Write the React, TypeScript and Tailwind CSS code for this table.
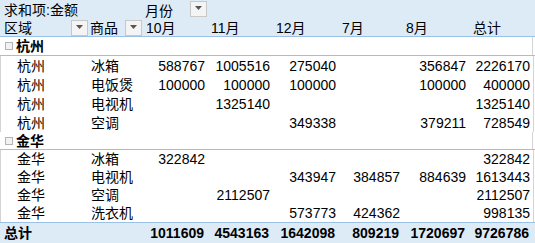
import React from 'react';

type Row = { region: string; product: string; values: (number | null)[]; total: number };

const months = ['10月', '11月', '12月', '7月', '8月'];

const groups: { name: string; h: string; rowH: string; rows: Row[] }[] = [
  {
    name: '杭州',
    h: 'h-[19px]',
    rowH: 'h-[19px]',
    rows: [
      { region: '杭州', product: '冰箱', values: [588767, 1005516, 275040, null, 356847], total: 2226170 },
      { region: '杭州', product: '电饭煲', values: [100000, 100000, 100000, null, 100000], total: 400000 },
      { region: '杭州', product: '电视机', values: [null, 1325140, null, null, null], total: 1325140 },
      { region: '杭州', product: '空调', values: [null, null, 349338, null, 379211], total: 728549 },
    ],
  },
  {
    name: '金华',
    h: 'h-[18px]',
    rowH: 'h-[18px]',
    rows: [
      { region: '金华', product: '冰箱', values: [322842, null, null, null, null], total: 322842 },
      { region: '金华', product: '电视机', values: [null, null, 343947, 384857, 884639], total: 1613443 },
      { region: '金华', product: '空调', values: [null, 2112507, null, null, null], total: 2112507 },
      { region: '金华', product: '洗衣机', values: [null, null, 573773, 424362, null], total: 998135 },
    ],
  },
];

const totals = [1011609, 4543163, 1642098, 809219, 1720697, 9726786];

const cols = 'grid grid-cols-[88px_54px_65px_65px_66px_64px_66px_64px_3px]';

const Dropdown = () => (
  <span className="flex h-[16px] w-[17px] items-start justify-center border border-[#c8c8c8] bg-[#f4f4f4] pt-[4px]">
    <svg width="7" height="4" viewBox="0 0 7 4">
      <path d="M0 0h7L3.5 4z" fill="#555" />
    </svg>
  </span>
);

const Collapse = () => (
  <span className="mr-[3px] inline-block h-[8px] w-[8px] border border-[#b4b4b4] bg-[#f2f2f2]" />
);

const Num = ({ v }: { v: number | null }) => (
  <div className="flex items-end justify-end pr-[3px] pb-[1px]">{v ?? ''}</div>
);

export default function App() {
  return (
    <div
      className="w-[535px] h-[243px] overflow-hidden bg-white text-[14px] leading-[16px] text-black"
      style={{ fontFamily: '"Liberation Sans", "Noto Sans CJK SC", sans-serif' }}
    >
      {/* Header */}
      <div className="bg-[#ddebf7] border-b border-[#9bc2e6]">
        <div className={`${cols} h-[19px]`}>
          <div className="col-span-2 flex items-end pl-[4px] pb-[1px]">求和项:金额</div>
          <div className="flex items-start justify-between pl-[3px] pt-[1px]">
            <span className="pt-[2px]">月份</span>
            <Dropdown />
          </div>
        </div>
        <div className={`${cols} h-[17px]`}>
          <div className="flex items-end justify-between pl-[4px]">
            <span>区域</span>
            <Dropdown />
          </div>
          <div className="flex items-end justify-between pl-[2px]">
            <span>商品</span>
            <Dropdown />
          </div>
          {months.map((m) => (
            <div key={m} className="flex items-end pl-[4px]">{m}</div>
          ))}
          <div className="flex items-end pl-[5px]">总计</div>
        </div>
      </div>

      {groups.map((g) => (
        <div key={g.name}>
          <div className={`${cols} ${g.h} border-b border-[#9bc2e6]`}>
            <div className="col-span-8 flex items-center pl-[5px] font-bold">
              <Collapse />
              {g.name}
            </div>
            <div className="border-l border-[#d4d4d4]" />
          </div>
          {g.rows.map((r) => (
            <div key={r.region + r.product} className={`${cols} ${g.rowH} border-l border-[#d4d4d4]`}>
              <div className="flex items-end pl-[16px] pb-[1px]">{r.region}</div>
              <div className="flex items-end pl-[2px] pb-[1px]">{r.product}</div>
              {r.values.map((v, i) => (
                <Num key={i} v={v} />
              ))}
              <Num v={r.total} />
              <div className="border-l border-[#d4d4d4]" />
            </div>
          ))}
        </div>
      ))}

      {/* Grand total */}
      <div className={`${cols} h-[21px] bg-[#ddebf7] border-t border-[#9bc2e6] font-bold`}>
        <div className="col-span-2 flex items-center pl-[4px]">总计</div>
        {totals.map((v, i) => (
          <div key={i} className="flex items-center justify-end pr-[3px]">{v}</div>
        ))}
      </div>
    </div>
  );
}
